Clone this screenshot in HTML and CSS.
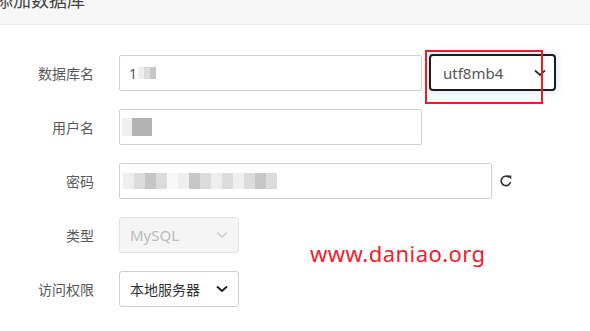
FILE: index.html
```html
<!DOCTYPE html>
<html lang="zh">
<head>
<meta charset="utf-8">
<link rel="stylesheet" href="styles.css">
</head>
<body>
<div class="header"><span class="title">添加数据库</span></div>
<div class="form">
  <div class="row">
    <label class="label">数据库名</label>
    <div class="input w303">
      <span class="glyph">1</span>
      <span class="mz"><i class="c1 h6"></i><i class="c2 h6"></i><i class="c3 h6"></i></span>
    </div>
    <div class="select focus">
      <span class="val">utf8mb4</span>
      <svg class="chev" viewBox="0 0 12 8" width="12" height="8"><path d="M1 1.5 L6 6 L11 1.5" fill="none" stroke="#333" stroke-width="1.8"/></svg>
    </div>
  </div>
  <div class="row">
    <label class="label">用户名</label>
    <div class="input w303">
      <span class="mz m2"><i class="c1 tall"></i><i class="c4 tall"></i><i class="c4 tall"></i></span>
    </div>
  </div>
  <div class="row">
    <label class="label">密码</label>
    <div class="input w373">
      <span class="mz m3">
        <i class="c1"></i><i class="c2"></i><i class="c3"></i><i class="c2"></i><i class="c5"></i><i class="c1"></i><i class="c3"></i><i class="c2"></i><i class="c1"></i><i class="c2"></i><i class="c1"></i><i class="c2"></i><i class="c3"></i><i class="c2"></i>
      </span>
    </div>
    <svg class="refresh" viewBox="0 0 16 16" width="14" height="14"><path d="M13.2 9.2 A5.4 5.4 0 1 1 11.6 3.9" fill="none" stroke="#333" stroke-width="1.9"/><path d="M9.2 1.6 L14 1.6 L14 6.4 Z" fill="#333"/></svg>
  </div>
  <div class="row">
    <label class="label">类型</label>
    <div class="select small disabled">
      <span class="val">MySQL</span>
      <svg class="chev" viewBox="0 0 12 8" width="12" height="8"><path d="M1 1.5 L6 6 L11 1.5" fill="none" stroke="#ccc" stroke-width="1.4"/></svg>
    </div>
    <span class="watermark">www.daniao.org</span>
  </div>
  <div class="row">
    <label class="label">访问权限</label>
    <div class="select small">
      <span class="val cn">本地服务器</span>
      <svg class="chev" viewBox="0 0 12 8" width="12" height="8"><path d="M1 1.5 L6 6 L11 1.5" fill="none" stroke="#222" stroke-width="2"/></svg>
    </div>
  </div>
</div>
<div class="highlight"></div>
</body>
</html>
```
FILE: styles.css
```css
* { box-sizing: border-box; }
html, body { margin: 0; padding: 0; background: #fff; width: 590px; height: 331px; overflow: hidden; }
body { font-family: "Noto Sans CJK SC", "Noto Sans", sans-serif; color: #555; position: relative; }
.header {
  height: 25px;
  background: #f7f7f7;
  border-bottom: 1px solid #e9e9e9;
  position: relative;
  overflow: hidden;
}
.title {
  position: absolute;
  left: -5px;
  top: -14px;
  font-size: 18px;
  color: #444;
  line-height: 26px;
}
.form { padding-top: 30px; display: flex; flex-direction: column; gap: 18px; }
.row { display: flex; align-items: center; height: 36px; position: relative; }
.label { width: 94px; text-align: right; font-size: 14px; color: #5a5a5a; margin-right: 25px; }
.input {
  height: 36px;
  border: 1px solid #d0d0d0;
  border-radius: 2px;
  display: flex;
  align-items: center;
  padding-left: 9px;
  background: #fff;
}
.w303 { width: 303px; }
.w373 { width: 373px; }
.glyph { font-size: 14px; color: #555; margin-right: 1px; font-family: "Noto Sans", sans-serif; }
.mz { display: flex; align-items: center; }
.mz i { display: block; width: 5px; height: 12px; }
.mz i.h6 { width: 6px; height: 12px; }
.mz i.tall { width: 10px; height: 18px; }
.m2 { margin-left: -7px; }
.m3 { margin-left: -6px; }
.m3 i { width: 11px; height: 16px; }
.c1 { background: #efefef; }
.c2 { background: #dcdcdc; }
.c3 { background: #c6c6c6; }
.c4 { background: #b3b3b3; }
.c5 { background: #f8f8f8; }
.select {
  height: 36px;
  border: 1px solid #cfcfcf;
  border-radius: 3px;
  display: flex;
  align-items: center;
  justify-content: space-between;
  padding: 0 10px 0 10px;
  background: #fff;
}
.select.focus {
  margin-left: 7px;
  width: 127px;
  height: 37px;
  margin-top: -1px;
  border: 2px solid #1c1c1c;
  border-radius: 4px;
  box-shadow: 0 0 6px 2px rgba(120, 170, 230, 0.25);
  padding-left: 12px;
  padding-right: 8px;
}
.select.small { width: 120px; }
.select .val { font-size: 15px; color: #555; font-family: "Noto Sans", sans-serif; }
.select .val.cn { font-family: "Noto Sans CJK SC", sans-serif; font-size: 14px; color: #333; }
.select.disabled { background: #f5f5f5; border-color: #e3e3e3; }
.select.disabled .val { color: #bbb; }
.refresh { margin-left: 7px; }
.watermark {
  position: absolute;
  left: 310px;
  top: 21px;
  font-size: 22px;
  color: #f0202d;
  font-family: "Noto Sans", sans-serif;
  letter-spacing: 0.45px;
}
.highlight {
  position: absolute;
  left: 425px;
  top: 50px;
  width: 118px;
  height: 54px;
  border: 2px solid #ee1c25;
}
```
